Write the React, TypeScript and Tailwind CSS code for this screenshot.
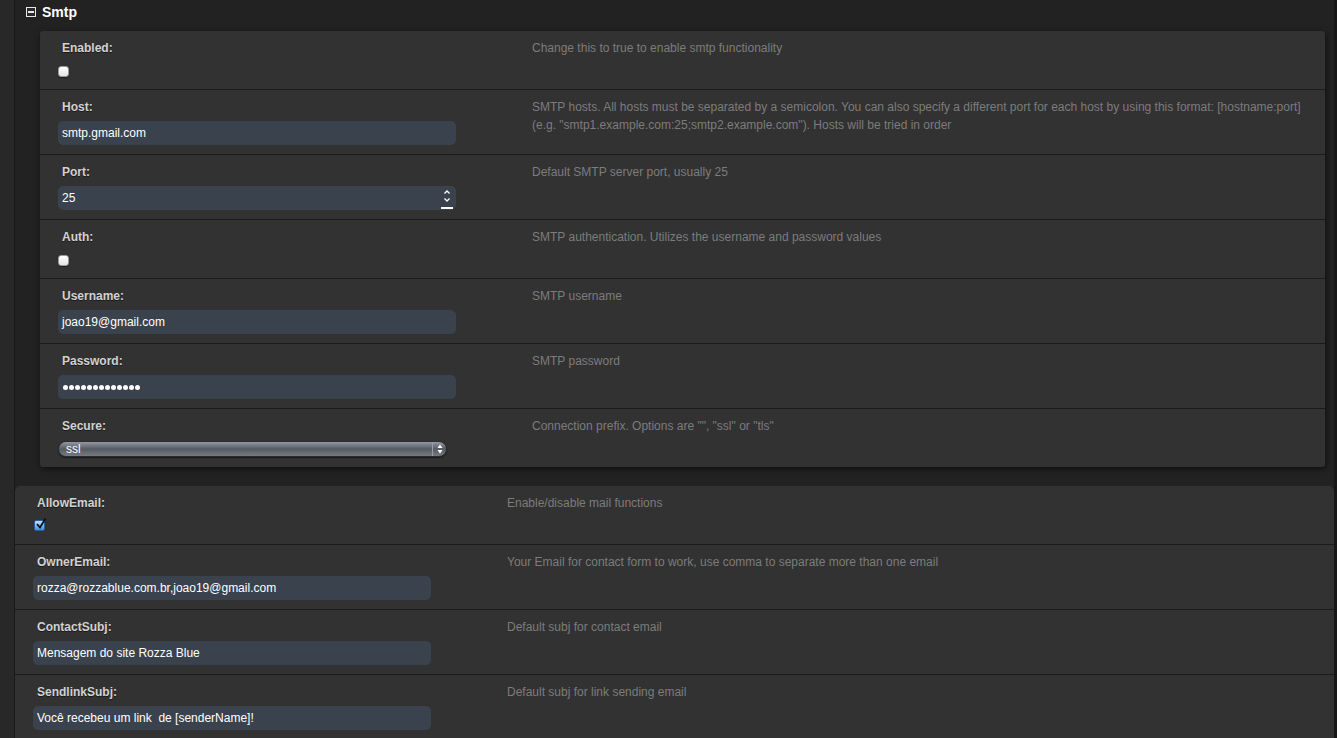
import React from "react";

type Row = {
  label: string;
  kind: "checkbox" | "text" | "number" | "password" | "select";
  value?: string;
  checked?: boolean;
  desc: string;
};

const smtpRows: Row[] = [
  { label: "Enabled:", kind: "checkbox", desc: "Change this to true to enable smtp functionality" },
  {
    label: "Host:",
    kind: "text",
    value: "smtp.gmail.com",
    desc: 'SMTP hosts. All hosts must be separated by a semicolon. You can also specify a different port for each host by using this format: [hostname:port] (e.g. "smtp1.example.com:25;smtp2.example.com"). Hosts will be tried in order',
  },
  { label: "Port:", kind: "number", value: "25", desc: "Default SMTP server port, usually 25" },
  { label: "Auth:", kind: "checkbox", desc: "SMTP authentication. Utilizes the username and password values" },
  { label: "Username:", kind: "text", value: "joao19@gmail.com", desc: "SMTP username" },
  { label: "Password:", kind: "password", value: "13", desc: "SMTP password" },
  { label: "Secure:", kind: "select", value: "ssl", desc: 'Connection prefix. Options are "", "ssl" or "tls"' },
];

const mailRows: Row[] = [
  { label: "AllowEmail:", kind: "checkbox", checked: true, desc: "Enable/disable mail functions" },
  {
    label: "OwnerEmail:",
    kind: "text",
    value: "rozza@rozzablue.com.br,joao19@gmail.com",
    desc: "Your Email for contact form to work, use comma to separate more than one email",
  },
  { label: "ContactSubj:", kind: "text", value: "Mensagem do site Rozza Blue", desc: "Default subj for contact email" },
  {
    label: "SendlinkSubj:",
    kind: "text",
    value: "Você recebeu um link  de [senderName]!",
    desc: "Default subj for link sending email",
  },
];

function Checkbox({ checked }: { checked?: boolean }) {
  if (checked) {
    return (
      <div className="relative mt-[9px] ml-[1px] w-[11px] h-[11px] rounded-[2px] bg-gradient-to-b from-[#bfe0ff] to-[#3d8fe6] border border-[#2a5d9a]">
        <svg className="absolute -top-[3px] left-[0px]" width="12" height="12" viewBox="0 0 12 12">
          <path d="M2 6 L5 9.5 L10.5 0.5" fill="none" stroke="#111" strokeWidth="1.8" />
        </svg>
      </div>
    );
  }
  return (
    <div className="mt-[10px] w-[11px] h-[11px] rounded-[3px] bg-gradient-to-b from-white to-[#e4e4e4] border border-[#9a9a9a] shadow-[0_1px_1px_rgba(0,0,0,0.4)]" />
  );
}

function Field({ row }: { row: Row }) {
  if (row.kind === "checkbox") return <Checkbox checked={row.checked} />;
  if (row.kind === "select") {
    return (
      <div className="mt-[7px] w-[389px] h-[16px] rounded-[8px] border border-[#2a2c30] bg-gradient-to-b from-[#959aa2] via-[#565b63] to-[#777c83] flex items-center shadow-[0_1px_1px_rgba(0,0,0,0.5)]">
        <span className="flex-1 pl-[7px] text-[12px] leading-[14px] text-white">{row.value}</span>
        <div className="h-full w-[14px] border-l border-[#9a9ea6] flex flex-col items-center justify-center">
          <svg width="6" height="10" viewBox="0 0 6 10">
            <path d="M3 0.5 L5.5 4 L0.5 4 Z" fill="#fff" />
            <path d="M3 9.5 L5.5 6 L0.5 6 Z" fill="#fff" />
          </svg>
        </div>
      </div>
    );
  }
  return (
    <div className="relative mt-[6px] w-[398px] h-[24px] rounded-[5px] bg-[#3a434d] flex items-center px-[4px]">
      {row.kind === "password" ? (
        <div className="flex gap-[1px] pl-[1px]">
          {Array.from({ length: Number(row.value) }).map((_, i) => (
            <div key={i} className="w-[5px] h-[5px] rounded-full bg-white" />
          ))}
        </div>
      ) : (
        <span className="text-[12px] text-white leading-[24px] whitespace-pre">{row.value}</span>
      )}
      {row.kind === "number" && (
        <div className="absolute right-[3px] top-[3px] flex flex-col items-center">
          <svg width="8" height="14" viewBox="0 0 8 14">
            <path d="M1.5 4.5 L4 2 L6.5 4.5" fill="none" stroke="#fff" strokeWidth="1.3" />
            <path d="M1.5 9.5 L4 12 L6.5 9.5" fill="none" stroke="#fff" strokeWidth="1.3" />
          </svg>
          <div className="mt-[4px] w-[12px] h-[2px] bg-white" />
        </div>
      )}
    </div>
  );
}

function SettingRow({ row, first }: { row: Row; first: boolean }) {
  const tall = row.kind === "checkbox" || row.kind === "select";
  return (
    <div
      className={
        (first ? "" : "border-t border-[#1b1b1b] ") +
        (tall ? "h-[58px] " : "h-[64px] ") +
        "box-content flex"
      }
    >
      <div className="w-[492px] pl-[18px] pt-[9px] shrink-0">
        <div className="pl-[4px] text-[12px] leading-[16px] font-bold text-[#d2d2d2] [text-shadow:0_1px_0_rgba(0,0,0,0.5)]">
          {row.label}
        </div>
        <Field row={row} />
      </div>
      <div className="flex-1 pt-[8px] pr-[10px] text-[12px] leading-[18px] text-[#7c7c7c]">{row.desc}</div>
    </div>
  );
}

export default function App() {
  return (
    <div className="w-[1337px] h-[738px] overflow-hidden flex bg-[#222] font-['Liberation_Sans',Arial,sans-serif]">
      <div className="w-[15px] shrink-0 bg-[#282828] border-r border-[#191919]" />
      <div className="flex-1 flex flex-col bg-[#222]">
        {/* Smtp group header */}
        <div className="h-[31px] shrink-0 flex items-start pt-[5px] pl-[11px] gap-[6px]">
          <div className="mt-[2px] w-[10px] h-[10px] border border-[#e8e8e8] bg-[#2a2a2a] flex items-center justify-center">
            <div className="w-[6px] h-[1.5px] bg-[#e8e8e8]" />
          </div>
          <span className="text-[14px] leading-[14px] font-bold text-white">Smtp</span>
        </div>

        {/* Smtp panel */}
        <div className="ml-[25px] mr-[9px] rounded-[3px] bg-[#323232] shadow-[1px_2px_6px_rgba(0,0,0,0.55)]">
          {smtpRows.map((r, i) => (
            <SettingRow key={r.label} row={r} first={i === 0} />
          ))}
        </div>

        {/* Mail settings */}
        <div className="mt-[19px] flex-1 rounded-t-[5px] bg-[#323232]">
          {mailRows.map((r, i) => (
            <SettingRow key={r.label} row={r} first={i === 0} />
          ))}
        </div>
      </div>
      <div className="w-[3px] shrink-0 bg-[#171717]" />
    </div>
  );
}
